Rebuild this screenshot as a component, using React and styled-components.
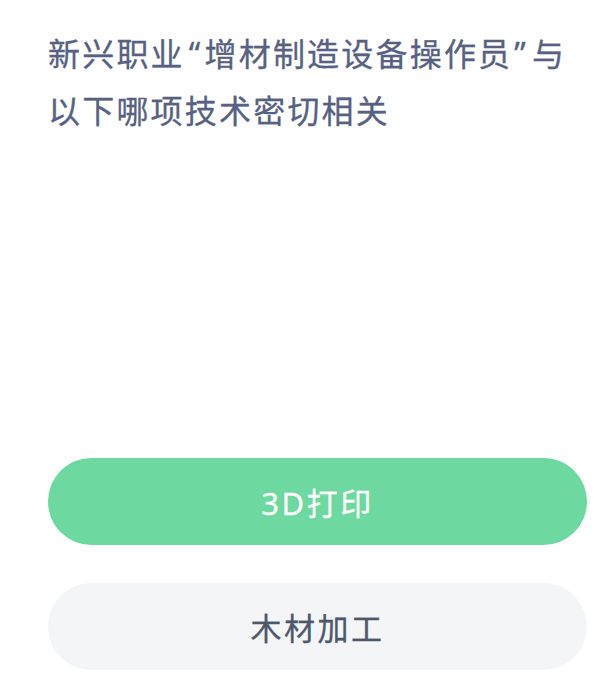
import styled, { createGlobalStyle } from "styled-components";

const GlobalStyle = createGlobalStyle`
  html, body {
    margin: 0;
    padding: 0;
    background: #ffffff;
  }
  body {
    font-family: "Noto Sans", "Noto Sans CJK SC", sans-serif;
  }
`

const Page = styled.div`
  width: 596px;
  height: 686px;
  box-sizing: border-box;
  padding: 25px 9px 0 48px;
  display: flex;
  flex-direction: column;
  overflow: hidden;
`

const Question = styled.div`
  font-size: 32px;
  line-height: 57px;
  letter-spacing: 2.2px;
  color: #566183;
  white-space: nowrap;
  -webkit-text-stroke: 0.3px #566183;
`

// narrow western quotes, the CJK ones are full width
const Quote = styled.span`
  margin: ${(p) => (p.$open ? "0 2px 0 4px" : "0 4px 0 2px")};
`

const Picture = styled.div`
  height: 319px;
  flex-shrink: 0;
`

const Options = styled.div`
  display: flex;
  flex-direction: column;
  gap: 38px;
`

const Option = styled.div`
  height: 87px;
  border-radius: 44px;
  display: flex;
  align-items: center;
  justify-content: center;
  font-size: 31px;
  letter-spacing: 2.5px;
  background: ${(p) => (p.$correct ? "#6dd8a0" : "#f4f5f7")};
  color: ${(p) => (p.$correct ? "#ffffff" : "#4d586b")};
  -webkit-text-stroke: 0.3px ${(p) => (p.$correct ? "#ffffff" : "#4d586b")};
`

const options = [
  { text: "3D打印", correct: true },
  { text: "木材加工", correct: false },
]

const App = () => {
  return (
    <>
      <GlobalStyle />
      <Page>
        <Question>
          新兴职业<Quote $open>“</Quote>增材制造设备操作员<Quote>”</Quote>与
          <br />
          以下哪项技术密切相关
        </Question>
        <Picture />
        <Options>
          {options.map((o) => (
            <Option key={o.text} $correct={o.correct}>
              {o.text}
            </Option>
          ))}
        </Options>
      </Page>
    </>
  )
}

export default App;
